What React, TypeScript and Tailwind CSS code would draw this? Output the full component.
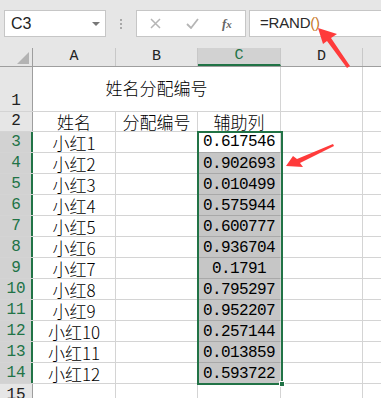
import React from "react";

const names = ["小红1","小红2","小红3","小红4","小红5","小红6","小红7","小红8","小红9","小红10","小红11","小红12"];
const nums = ["0.617546","0.902693","0.010499","0.575944","0.600777","0.936704","0.1791","0.795297","0.952207","0.257144","0.013859","0.593722"];

const cjk = { fontFamily: '"Noto Sans CJK SC", "Liberation Sans", sans-serif' };
const mono = { fontFamily: '"Liberation Mono", "Noto Sans CJK SC", monospace' };

function Cell({ w, children, className = "", style }: { w: string; children?: React.ReactNode; className?: string; style?: React.CSSProperties }) {
  return (
    <div className={`${w} shrink-0 border-r border-[#d4d4d4] flex items-end justify-center whitespace-nowrap ${className}`} style={style}>
      {children}
    </div>
  );
}

export default function App() {
  return (
    <div className="w-[381px] h-[398px] overflow-hidden bg-white relative" style={{ fontFamily: '"Liberation Sans", sans-serif' }}>
      {/* Formula bar */}
      <div className="h-[48px] bg-[#e6e6e6] flex items-start pt-[10px]">
        <div className="ml-[4px] w-[102px] h-[27px] bg-white border border-[#c6c6c6] flex items-center pl-[6px] pr-[5px] shrink-0">
          <span className="text-[16px] text-[#222] flex-1">C3</span>
          <svg width="8" height="4" viewBox="0 0 8 4"><polygon points="0,0 8,0 4,4" fill="#777" /></svg>
        </div>
        <div className="ml-[14px] mt-[9px] flex flex-col gap-[2px] shrink-0">
          <div className="w-[2px] h-[2px] bg-[#a8a8a8]" />
          <div className="w-[2px] h-[2px] bg-[#a8a8a8]" />
          <div className="w-[2px] h-[2px] bg-[#a8a8a8]" />
        </div>
        <div className="ml-[14px] w-[110px] h-[27px] bg-white border border-[#c6c6c6] flex items-center shrink-0">
          <svg className="ml-[13px]" width="11" height="11" viewBox="0 0 11 11"><path d="M1 1L10 10M10 1L1 10" stroke="#b5b5b5" strokeWidth="1.5" /></svg>
          <svg className="ml-[25px]" width="13" height="11" viewBox="0 0 13 11"><path d="M1 6L5 10L12 1" stroke="#b5b5b5" strokeWidth="1.8" fill="none" /></svg>
          <span className="ml-[23px] text-[13px] italic text-[#666] font-bold" style={{ fontFamily: '"Liberation Serif", serif' }}>f<span className="text-[11px]">x</span></span>
        </div>
        <div className="ml-[3px] flex-1 h-[27px] bg-white border border-r-0 border-[#c6c6c6] flex items-center pl-[10px]">
          <span className="text-[15px] text-[#2a2a2a] tracking-[-0.2px]">=RAND<span className="text-[#c77a2a]">()</span></span>
        </div>
      </div>

      {/* Column headers */}
      <div className="flex h-[19px] bg-[#e6e6e6] border-b border-[#9e9e9e]" style={mono}>
        <div className="w-[33px] shrink-0 border-r border-[#9e9e9e] relative">
          <svg className="absolute left-[17px] top-[4px]" width="12" height="12" viewBox="0 0 12 12"><polygon points="12,0 12,12 0,12" fill="#b3b3b3" /></svg>
        </div>
        {[
          ["w-[83px]", "A", false],
          ["w-[82px]", "B", false],
          ["w-[83px]", "C", true],
          ["w-[82px]", "D", false],
        ].map(([w, l, sel]) => (
          <div key={l as string} className={`${w} shrink-0 border-r border-[#c8c8c8] flex items-center justify-center text-[15px] ${sel ? "bg-[#d2d2d2] border-b-2 border-b-[#217346] text-[#217346]" : "text-[#222]"}`}>
            {l}
          </div>
        ))}
        <div className="flex-1" />
      </div>

      {/* Row 1 */}
      <div className="flex h-[45px] border-b border-[#d4d4d4]">
        <div className="w-[33px] shrink-0 bg-[#e6e6e6] border-r border-[#9e9e9e] flex items-end justify-center text-[16px] text-[#222] leading-none pb-[2px]" style={mono}>1</div>
        <div className="w-[248px] shrink-0 border-r border-[#d4d4d4] flex items-start justify-center pt-[12px] text-[17px] font-light text-black leading-none" style={cjk}>姓名分配编号</div>
        <Cell w="w-[82px]" />
        <div className="flex-1" />
      </div>

      {/* Row 2 */}
      <div className="flex h-[20px] border-b border-[#d4d4d4]">
        <div className="w-[33px] shrink-0 bg-[#e6e6e6] border-r border-[#9e9e9e] flex items-end justify-center text-[16px] text-[#222] leading-none pb-[2px]" style={mono}>2</div>
        <Cell w="w-[83px]" className="text-[17px] font-light leading-none pb-[1px] text-black" style={cjk}>姓名</Cell>
        <Cell w="w-[82px]" className="text-[17px] font-light leading-none pb-[1px] text-black" style={cjk}>分配编号</Cell>
        <Cell w="w-[83px]" className="text-[17px] font-light leading-none pb-[1px] text-black" style={cjk}>辅助列</Cell>
        <Cell w="w-[82px]" />
        <div className="flex-1" />
      </div>

      {/* Data rows */}
      {names.map((n, i) => (
        <div key={n} className="flex h-[21px] border-b border-[#d4d4d4]">
          <div className="w-[33px] shrink-0 bg-[#d2d2d2] border-r-2 border-[#217346] flex items-end justify-center text-[16px] leading-none pb-[2px] text-[#217346] pl-[1px]" style={mono}>{i + 3}</div>
          <Cell w="w-[83px]" className="text-[17px] font-light leading-none pb-[1px] text-black" style={cjk}>{n}</Cell>
          <Cell w="w-[82px]" />
          <div className={`w-[83px] shrink-0 border-r border-[#d4d4d4] flex items-end justify-center text-[16px] leading-none pb-[2px] tracking-[-0.6px] text-black ${i === 0 ? "bg-white" : "bg-[#c6c6c6] border-t border-t-[#a9a9a9] -mt-[1px] h-[22px]"}`} style={mono}>{nums[i]}</div>
          <Cell w="w-[82px]" />
          <div className="flex-1" />
        </div>
      ))}

      {/* Row 15 */}
      <div className="flex h-[21px]">
        <div className="w-[33px] shrink-0 bg-[#e6e6e6] border-r border-[#9e9e9e] flex items-end justify-center text-[16px] leading-none pb-[2px] text-[#222]" style={mono}>15</div>
        <Cell w="w-[83px]" />
        <Cell w="w-[82px]" />
        <Cell w="w-[83px]" />
        <Cell w="w-[82px]" />
        <div className="flex-1" />
      </div>

      {/* Selection outline */}
      <div className="absolute left-[197px] top-[131px] w-[86px] h-[254px] border-2 border-[#217346] pointer-events-none" />
      <div className="absolute left-[279px] top-[381px] w-[6px] h-[6px] bg-[#217346] border border-white" />

      {/* Red arrows */}
      <svg className="absolute left-0 top-0 pointer-events-none" width="381" height="398" viewBox="0 0 381 398">
        <polygon points="318,28 323,44 327,41 347,68 350,66 331,38 337,34" fill="#ff3b3b" />
        <polygon points="286,166 303,167 300,163 334,146 333,144 297,159 293,156" fill="#ff3b3b" />
      </svg>
    </div>
  );
}
